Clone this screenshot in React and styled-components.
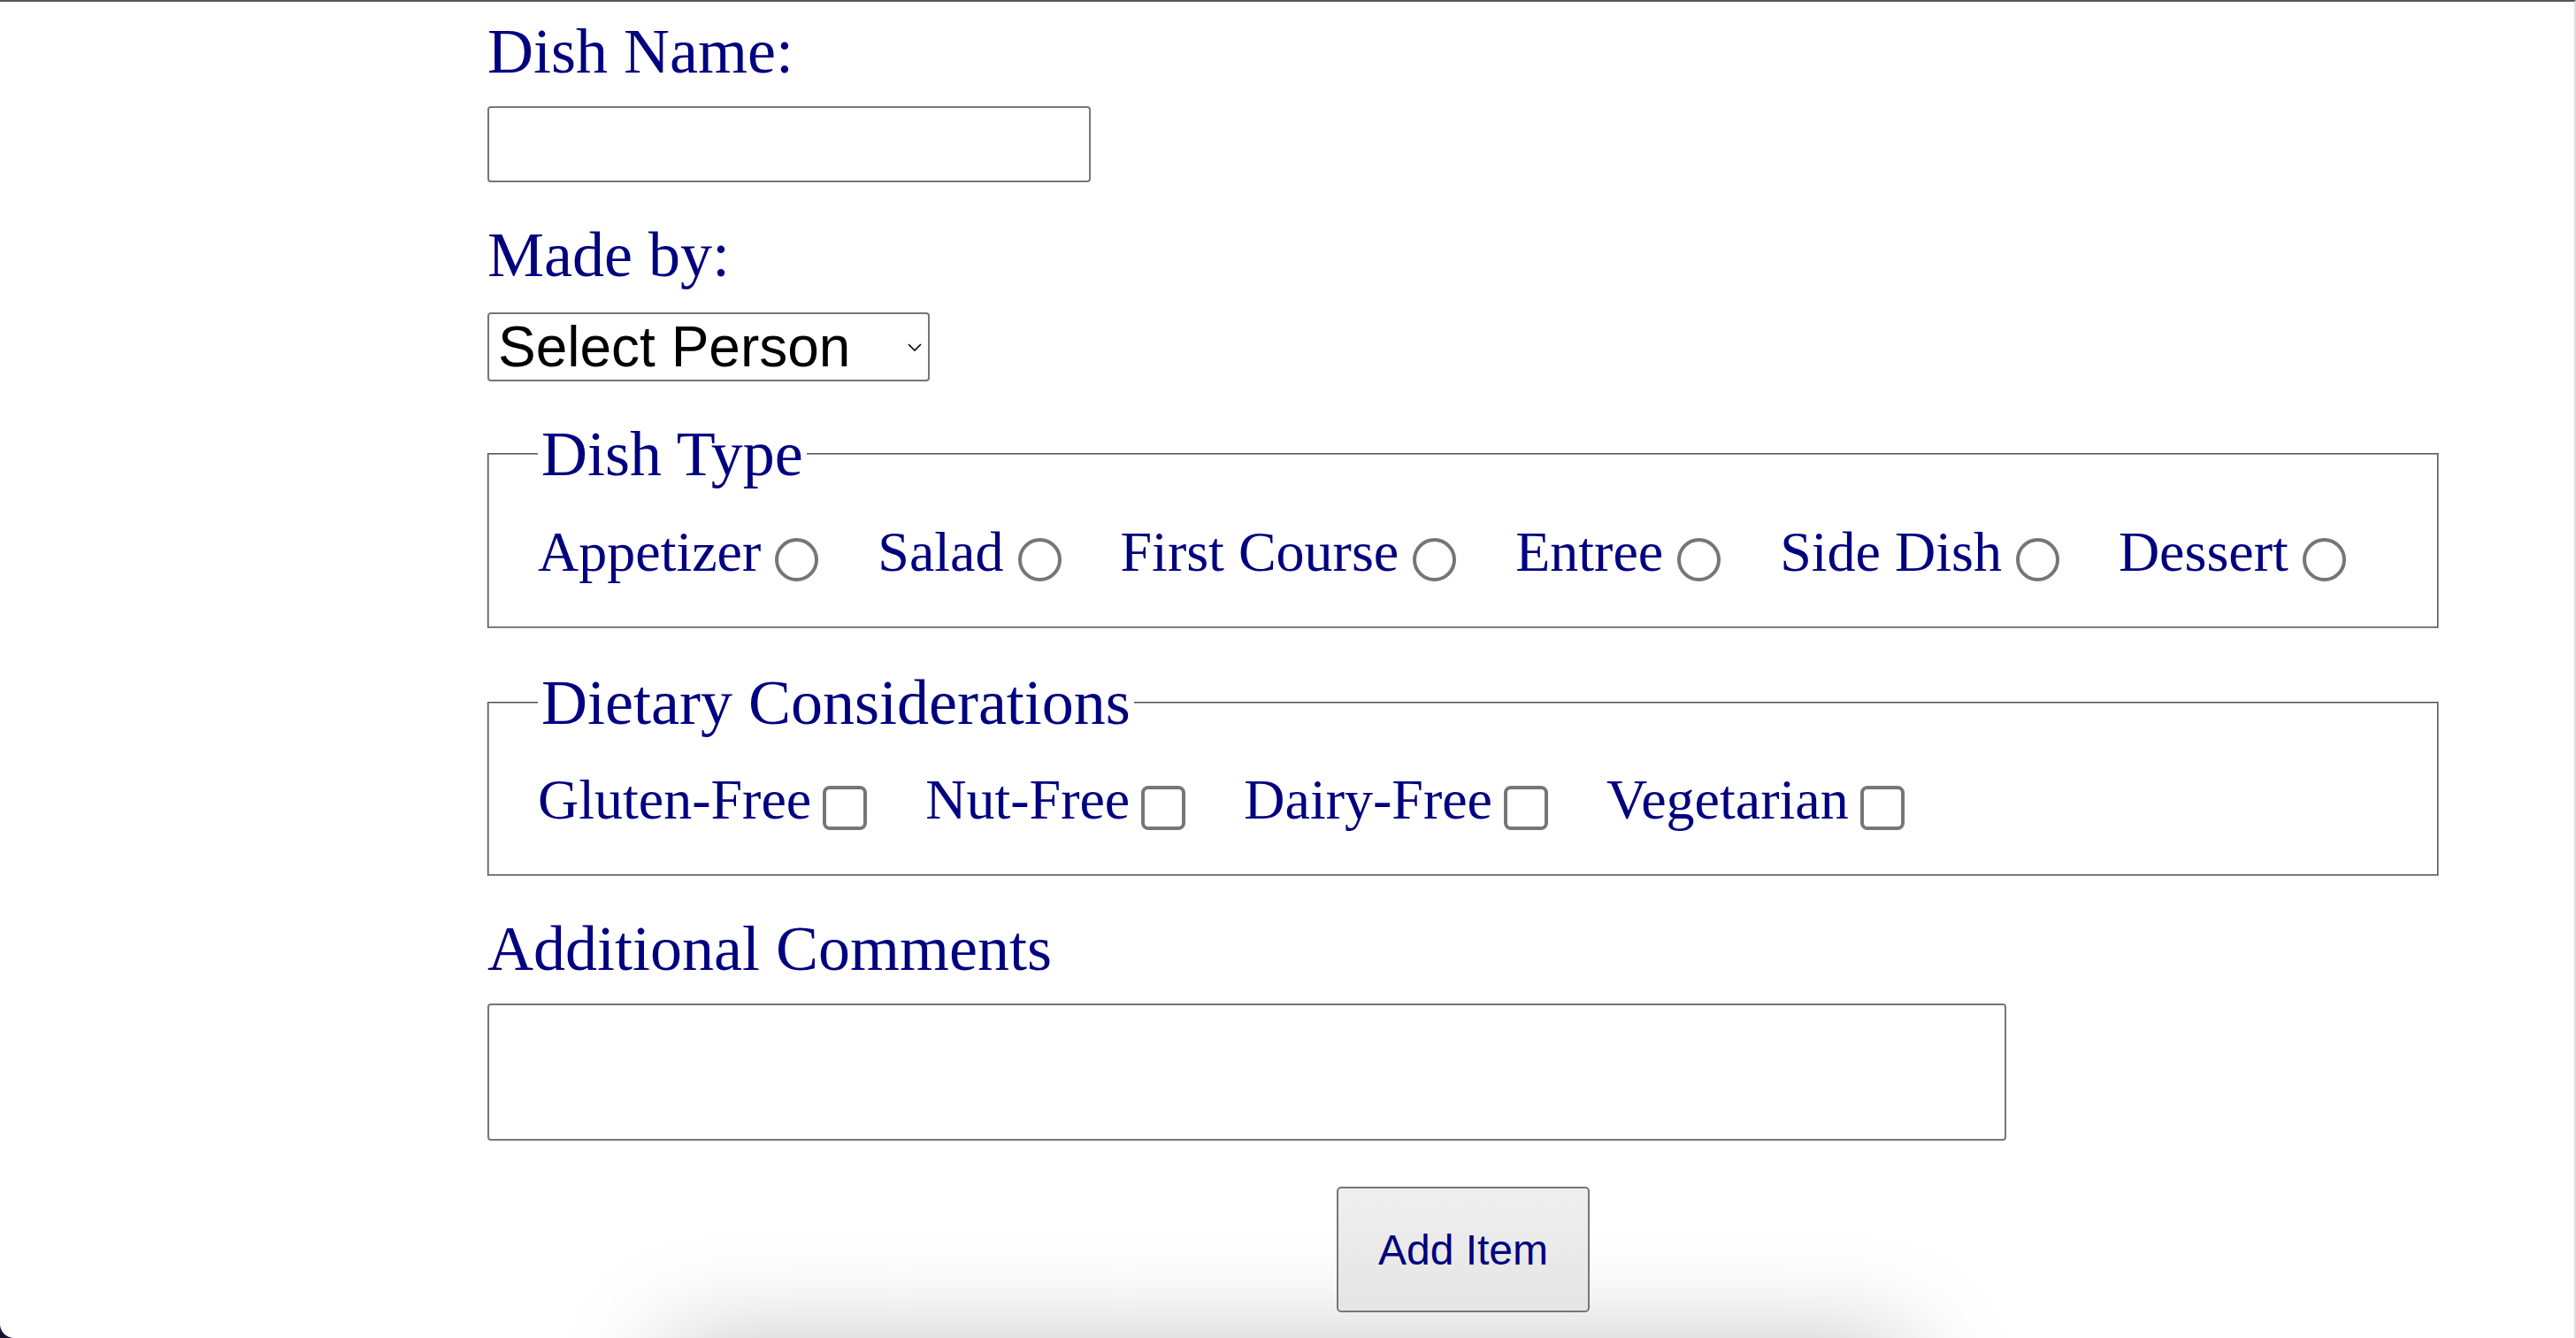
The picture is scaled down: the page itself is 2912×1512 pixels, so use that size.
import React from "react";
import styled, { createGlobalStyle } from "styled-components";

// 폼 페이지 전역 스타일
const GlobalStyle = createGlobalStyle`
  html, body {
    margin: 0;
    padding: 0;
    background: #1a1233;
  }
`;

const SERIF = `"Liberation Serif", "Times New Roman", serif`;
const SANS = `"Liberation Sans", Arial, sans-serif`;

const dishTypes = ["Appetizer", "Salad", "First Course", "Entree", "Side Dish", "Dessert"];
const dietary = ["Gluten-Free", "Nut-Free", "Dairy-Free", "Vegetarian"];

const App = () => {
  return (
    <Screen>
      <GlobalStyle />
      <Form onSubmit={(e) => e.preventDefault()}>
        <Label htmlFor="dish">Dish Name:</Label>
        <TextInput id="dish" type="text" />

        <Label htmlFor="person" $gap={41}>Made by:</Label>
        <SelectWrap>
          <Select id="person" defaultValue="">
            <option value="">Select Person</option>
          </Select>
          {/* 셀렉트 화살표 */}
          <Chevron width="16" height="9" viewBox="0 0 16 9">
            <path d="M1 1 L8 8 L15 1" fill="none" stroke="#000" strokeWidth="1.6" />
          </Chevron>
        </SelectWrap>

        <Group>
          <Legend>Dish Type</Legend>
          <Row>
            {dishTypes.map((t, idx) => (
              <Option key={`type_${idx}`}>
                <span>{t}</span>
                <Radio type="radio" name="dishType" value={t} />
              </Option>
            ))}
          </Row>
        </Group>

        <Group $tight>
          <Legend>Dietary Considerations</Legend>
          <Row>
            {dietary.map((d, idx) => (
              <Option key={`diet_${idx}`}>
                <span>{d}</span>
                <Check type="checkbox" name={d} />
              </Option>
            ))}
          </Row>
        </Group>

        <Label htmlFor="comments" $gap={41}>Additional Comments</Label>
        <Comments id="comments" />

        <ButtonRow>
          <AddButton type="submit">Add Item</AddButton>
        </ButtonRow>
      </Form>
      <ShadowCard />
    </Screen>
  );
};

const Screen = styled.div`
  height: 1512px;
  box-sizing: border-box;
  padding-top: 15px;
  border-top: 2px solid #555;
  border-right: 2px solid #dedede;
  border-bottom-left-radius: 16px;
  background: #fff;
  overflow: hidden;
`;

const Form = styled.form`
  width: 2206px;
  margin-left: 551px;
`;

const Label = styled.label`
  display: block;
  margin-top: ${(p) => (p.$gap ? `${p.$gap}px` : "0")};
  font-family: ${SERIF};
  font-size: 72px;
  line-height: 82px;
  color: #000080;
`;

const TextInput = styled.input`
  display: block;
  box-sizing: border-box;
  width: 682px;
  height: 86px;
  margin-top: 21px;
  border: 2px solid #767676;
  border-radius: 4px;
  background: #fff;
`;

const SelectWrap = styled.div`
  position: relative;
  width: 500px;
  margin-top: 24px;
`;

const Select = styled.select`
  display: block;
  box-sizing: border-box;
  width: 500px;
  height: 78px;
  padding: 0 0 0 10px;
  border: 2px solid #767676;
  border-radius: 4px;
  background: #fff;
  appearance: none;
  font-family: ${SANS};
  font-size: 64px;
  color: #000;
`;

const Chevron = styled.svg`
  position: absolute;
  right: 9px;
  top: 35px;
  pointer-events: none;
`;

const Group = styled.fieldset`
  margin: ${(p) => (p.$tight ? "43px" : "41px")} 0 0 0;
  padding: ${(p) => (p.$tight ? "33px" : "34px")} 55px 48px 55px;
  min-width: 0;
  border: 2px groove #a4a4a4;
`;

const Legend = styled.legend`
  padding: 0 4px;
  font-family: ${SERIF};
  font-size: 72px;
  line-height: 82px;
  color: #000080;
`;

const Row = styled.div`
  font-family: ${SERIF};
  font-size: 64px;
  line-height: 72px;
  color: #000080;
  white-space: nowrap;
`;

const Option = styled.span`
  display: inline;
`;

const Radio = styled.input`
  appearance: none;
  box-sizing: border-box;
  width: 49px;
  height: 49px;
  margin: 0 67px 0 16px;
  border: 4px solid #767676;
  border-radius: 50%;
  background: #fff;
  vertical-align: -12px;
`;

const Check = styled.input`
  appearance: none;
  box-sizing: border-box;
  width: 50px;
  height: 50px;
  margin: 0 66px 0 13px;
  border: 4px solid #767676;
  border-radius: 8px;
  background: #fff;
  vertical-align: -13px;
`;

const Comments = styled.textarea`
  display: block;
  box-sizing: border-box;
  width: 1717px;
  height: 155px;
  margin-top: 21px;
  border: 2px solid #767676;
  border-radius: 4px;
  resize: none;
`;

const ButtonRow = styled.div`
  margin-top: 52px;
  text-align: center;
`;

const AddButton = styled.button`
  box-sizing: border-box;
  width: 286px;
  height: 142px;
  border: 2px solid #767676;
  border-radius: 5px;
  background: linear-gradient(#efefef, #e5e5e5);
  font-family: ${SANS};
  font-size: 48px;
  color: #000080;
`;

// 아래쪽 카드 그림자 (화면 밖)
const ShadowCard = styled.div`
  width: 1400px;
  height: 300px;
  margin: 36px auto 0;
  background: #fff;
  box-shadow: 0 0 120px rgba(0, 0, 0, 0.25);
`;

export default App;
